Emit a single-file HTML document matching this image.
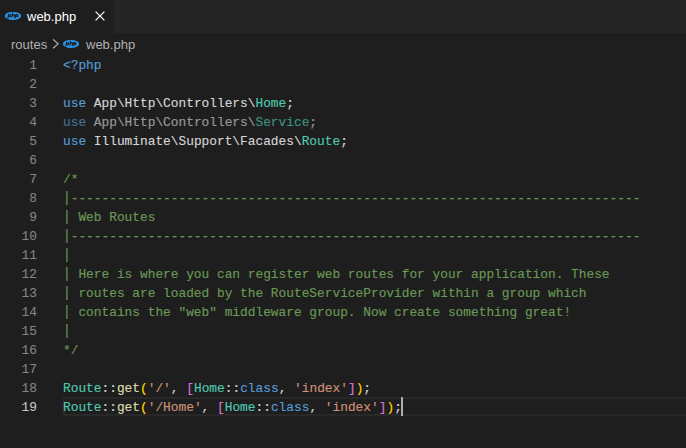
<!DOCTYPE html>
<html><head><meta charset="utf-8">
<style>
html,body{margin:0;padding:0;}
body{width:686px;height:448px;overflow:hidden;background:#1e1e1e;position:relative;font-family:"Liberation Sans",sans-serif;}
#tabs{position:absolute;left:0;top:0;width:686px;height:33px;background:#252526;}
#tab{position:absolute;left:0;top:0;width:114px;height:33px;background:#1e1e1e;}
.phpi{position:absolute;}
#tabname{position:absolute;left:27px;top:8px;font-size:13px;line-height:17px;color:#ffffff;white-space:pre;}
#close{position:absolute;left:95px;top:11px;}
#bc{position:absolute;left:0;top:33px;width:686px;height:22px;color:#b2b2b2;font-size:13px;}
#bc span{position:absolute;top:3px;line-height:17px;white-space:pre;}
#ed{position:absolute;left:0;top:56px;width:686px;}
.ln{-webkit-text-stroke:0.1px currentColor;position:absolute;left:0;width:37px;text-align:right;color:#858585;font-family:"Liberation Mono",monospace;font-size:12.83px;line-height:19px;height:19px;}
.cl{-webkit-text-stroke:0.15px currentColor;position:absolute;left:63px;color:#d4d4d4;font-family:"Liberation Mono",monospace;font-size:12.83px;line-height:19px;height:19px;white-space:pre;}
.bar{display:inline-block;transform:translateY(0.8px) scaleY(1.17);transform-origin:50% 84%;}
.k{color:#569cd6}.t{color:#4ec9b0}.c{color:#6a9955}.f{color:#dcdcaa}.s{color:#ce9178}.b1{color:#ffd700}.b2{color:#da70d6}
#cur{position:absolute;left:63px;top:397px;width:640px;height:15px;border:2px solid #282828;border-right:none;}
#caret{position:absolute;left:401px;top:397px;width:2px;height:19px;background:#aeafad;}
</style></head><body>
<div id="tabs">
  <div id="tab">
    <svg class="phpi" style="left:4px;top:11px" width="18" height="10" viewBox="0 0 18 10"><ellipse cx="9" cy="4.95" rx="8.15" ry="4.05" fill="#2b95e8"/><g fill="none" stroke="#1b1b1b" stroke-width="1.05"><ellipse cx="5.6" cy="4.7" rx="1.25" ry="1.1"/><path d="M4.7 3.4L3.7 7.3"/><path d="M8.7 1.9L7.6 6.7M8.2 4.3Q9.6 3.2 10.5 4.0L10.1 6.7"/><ellipse cx="12.9" cy="4.7" rx="1.25" ry="1.1"/><path d="M12.0 3.4L11.0 7.3"/></g></svg>
    <div id="tabname">web.php</div>
    <svg id="close" width="10" height="10" viewBox="0 0 10 10"><path d="M0.6 0.6L9.4 9.4M9.4 0.6L0.6 9.4" stroke="#ffffff" stroke-width="1.25"/></svg>
  </div>
</div>
<div id="bc">
  <span style="left:11px">routes</span>
  <svg style="position:absolute;left:52px;top:5px" width="8" height="12" viewBox="0 0 8 12"><path d="M1.1 1.4L6.1 5.85L1.1 10.3" stroke="#b8b8b8" stroke-width="1.15" fill="none"/></svg>
  <svg class="phpi" style="left:62px;top:6px" width="18" height="10" viewBox="0 0 18 10"><ellipse cx="9" cy="4.95" rx="8.15" ry="4.05" fill="#2b95e8"/><g fill="none" stroke="#1b1b1b" stroke-width="1.05"><ellipse cx="5.6" cy="4.7" rx="1.25" ry="1.1"/><path d="M4.7 3.4L3.7 7.3"/><path d="M8.7 1.9L7.6 6.7M8.2 4.3Q9.6 3.2 10.5 4.0L10.1 6.7"/><ellipse cx="12.9" cy="4.7" rx="1.25" ry="1.1"/><path d="M12.0 3.4L11.0 7.3"/></g></svg>
  <span style="left:86px">web.php</span>
</div>
<div id="cur"></div>
<div id="ed">
<div class="ln" style="top:0px">1</div><div class="cl" style="top:0px"><span class="k">&lt;?php</span></div>
<div class="ln" style="top:19px">2</div>
<div class="ln" style="top:38px">3</div><div class="cl" style="top:38px"><span class="k">use</span> App\Http\Controllers\<span class="t">Home</span>;</div>
<div class="ln" style="top:57px">4</div><div class="cl" style="top:57px;opacity:0.667"><span class="k">use</span> App\Http\Controllers\<span class="t">Service</span>;</div>
<div class="ln" style="top:76px">5</div><div class="cl" style="top:76px"><span class="k">use</span> Illuminate\Support\Facades\<span class="t">Route</span>;</div>
<div class="ln" style="top:95px">6</div>
<div class="ln" style="top:114px">7</div><div class="cl c" style="top:114px">/*</div>
<div class="ln" style="top:133px">8</div><div class="cl c" style="top:133px"><span class="bar">|</span>--------------------------------------------------------------------------</div>
<div class="ln" style="top:152px">9</div><div class="cl c" style="top:152px"><span class="bar">|</span> Web Routes</div>
<div class="ln" style="top:171px">10</div><div class="cl c" style="top:171px"><span class="bar">|</span>--------------------------------------------------------------------------</div>
<div class="ln" style="top:190px">11</div><div class="cl c" style="top:190px"><span class="bar">|</span></div>
<div class="ln" style="top:209px">12</div><div class="cl c" style="top:209px"><span class="bar">|</span> Here is where you can register web routes for your application. These</div>
<div class="ln" style="top:228px">13</div><div class="cl c" style="top:228px"><span class="bar">|</span> routes are loaded by the RouteServiceProvider within a group which</div>
<div class="ln" style="top:247px">14</div><div class="cl c" style="top:247px"><span class="bar">|</span> contains the "web" middleware group. Now create something great!</div>
<div class="ln" style="top:266px">15</div><div class="cl c" style="top:266px"><span class="bar">|</span></div>
<div class="ln" style="top:285px">16</div><div class="cl c" style="top:285px">*/</div>
<div class="ln" style="top:304px">17</div>
<div class="ln" style="top:323px">18</div><div class="cl" style="top:323px"><span class="t">Route</span>::<span class="f">get</span><span class="b1">(</span><span class="s">'/'</span>, <span class="b2">[</span><span class="t">Home</span>::<span class="k">class</span>, <span class="s">'index'</span><span class="b2">]</span><span class="b1">)</span>;</div>
<div class="ln" style="top:342px;color:#c6c6c6">19</div><div class="cl" style="top:342px"><span class="t">Route</span>::<span class="f">get</span><span class="b1">(</span><span class="s">'/Home'</span>, <span class="b2">[</span><span class="t">Home</span>::<span class="k">class</span>, <span class="s">'index'</span><span class="b2">]</span><span class="b1">)</span>;</div>
</div>
<div id="caret"></div>
</body></html>
